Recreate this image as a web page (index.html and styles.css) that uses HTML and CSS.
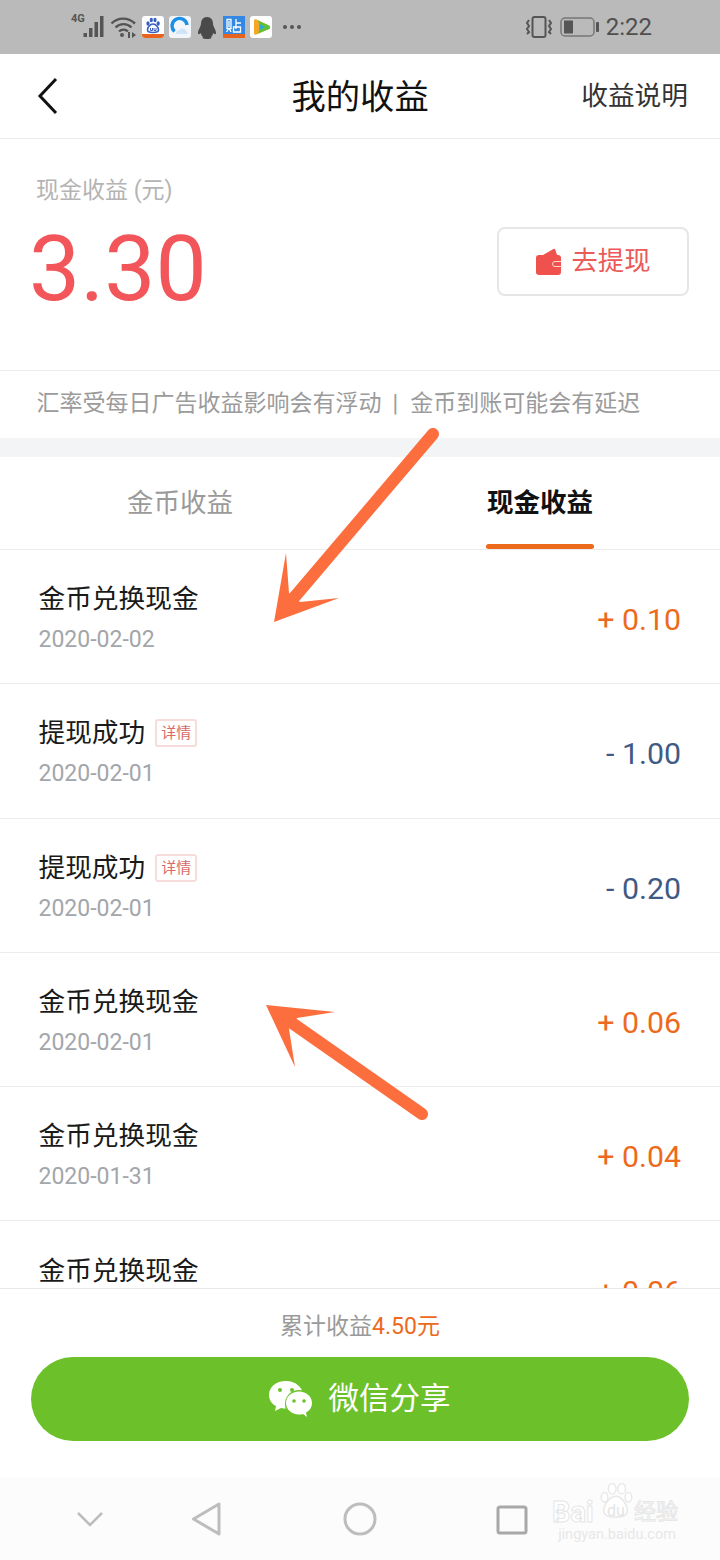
FILE: index.html
```html
<!DOCTYPE html>
<html lang="zh-CN">
<head>
    <meta charset="UTF-8">
    <meta name="viewport" content="width=device-width, initial-scale=1.0">
    <title>我的收益</title>
    <link rel="stylesheet" href="styles.css">
</head>
<body>
    <div class="phone">
        <div class="status-bar">
            <div class="status-left">
                <span class="net">4G</span>
                <svg class="ic-signal" width="22" height="24" viewBox="0 0 22 24"><g fill="#555"><rect x="0.500" y="18" width="3.500" height="4"/><rect x="6" y="13" width="3.500" height="9"/><rect x="11.500" y="7" width="3.500" height="15"/><rect x="17" y="1" width="3.500" height="21"/></g></svg>
                <svg class="ic-wifi" width="27" height="22" viewBox="0 0 27 22"><g fill="none" stroke="#555" stroke-width="2.4"><path d="M1.5 7.5C8 1 18 1 25 7.5"/><path d="M5.5 11.5C10 7 17 7 21.5 11.5"/><path d="M9 15.5C11.5 13 15.5 13 18 15.5"/></g><circle cx="12" cy="19" r="2" fill="#555"/><path d="M18 16h2v6h-2zM22 16l4 3-4 3z" fill="#555"/></svg>
                <span class="app">
                    <svg width="22" height="22" viewBox="0 0 22 22"><rect width="22" height="22" rx="3" fill="#fff"/><g fill="#3a5fc4"><ellipse cx="6" cy="7.500" rx="1.600" ry="2.200"/><ellipse cx="9.300" cy="4" rx="1.600" ry="2.200"/><ellipse cx="13" cy="4" rx="1.600" ry="2.200"/><ellipse cx="16.200" cy="7.500" rx="1.600" ry="2.200"/></g><path d="M11 8c3 0 5.500 3.500 5.500 6 0 2-2 2.500-5.500 2.500S5.500 16 5.500 14c0-2.500 2.500-6 5.500-6z" fill="#fff" stroke="#3a5fc4" stroke-width="1.600"/><path d="M8.500 12v2.500h2V12M12 12v2.500h2V12" fill="none" stroke="#3a5fc4"/><path d="M0 18h22v1a3 3 0 0 1-3 3H3a3 3 0 0 1-3-3z" fill="#e8641e"/></svg>
                </span>
                <span class="app">
                    <svg width="22" height="22" viewBox="0 0 22 22"><rect width="22" height="22" rx="3" fill="#f2f6fb"/><path d="M5.500 15.500A7.500 7.500 0 1 1 18 9" fill="none" stroke="#1a8fe8" stroke-width="3.400"/><path d="M7 18c0-3 2-4 4-4 1-2 5-2 6 1 2 0 3 3 0 3z" fill="#cfe4f7"/></svg>
                </span>
                <svg class="ic-qq" width="22" height="23" viewBox="0 0 22 23"><path d="M11 1c4 0 6 3 6 7 0 2 3 6 3 9 0 2-2 1-3 0 0 2-1 3-2 4 1 1 0 2-4 2s-5-1-4-2c-1-1-2-2-2-4-1 1-3 2-3 0 0-3 3-7 3-9 0-4 2-7 6-7z" fill="#4a4a4a"/></svg>
                <span class="app">
                    <svg width="22" height="22" viewBox="0 0 22 22"><rect width="22" height="22" fill="#3388e6"/><g fill="none" stroke="#fff" stroke-width="1.300"><path d="M4 3.500h4v9H4zM6 5v6M3.500 16l2-3M8 16l-1.500-3"/><path d="M13 3v10M13 7h5M10.500 11h7v5h-7z"/></g><path d="M0 18h22v4H0z" fill="#e8641e"/></svg>
                </span>
                <span class="app">
                    <svg width="22" height="22" viewBox="0 0 22 22"><rect width="22" height="22" rx="3" fill="#fff"/><path d="M4 5c0-1.500 1-2 2.500-1.500L19 9.500c1.500 1 1.500 2.500 0 3.500L6.500 18.500C5 19 4 18.500 4 17z" fill="#f5a623"/><path d="M8 4.500L19 9.500c1.500 1 1.500 2.500 0 3.500L8 17.500c2-4 2-9 0-13z" fill="#5cc23a"/><path d="M9.500 8l5.500 3-5.500 3z" fill="#2fa7e0"/></svg>
                </span>
                <span class="more"><i></i><i></i><i></i></span>
            </div>
            <div class="status-right">
                <svg width="28" height="24" viewBox="0 0 28 24"><rect x="7.500" y="2" width="13" height="20" rx="2" fill="none" stroke="#555" stroke-width="2"/><g fill="none" stroke="#555" stroke-width="2"><path d="M4 5l-2 3 2 3-2 3 2 3 -2 2"/><path d="M24 5l2 3-2 3 2 3-2 3 2 2"/></g></svg>
                <svg width="39" height="20" viewBox="0 0 39 20"><rect x="1" y="1" width="33" height="18" rx="4" fill="none" stroke="#777" stroke-width="1.500"/><rect x="4" y="3.500" width="9" height="13" fill="#555"/><rect x="36" y="5" width="3" height="10" rx="1" fill="#555"/></svg>
                <span class="clock">2:22</span>
            </div>
        </div>

        <header class="topbar">
            <svg class="back" width="22" height="38" viewBox="0 0 22 38"><path d="M19 2L3 19l16 17" fill="none" stroke="#111" stroke-width="3"/></svg>
            <h1>我的收益</h1>
            <a class="explain" href="#">收益说明</a>
        </header>

        <section class="summary">
            <div>
                <p class="summary-label">现金收益 (元)</p>
                <p class="summary-value">3.30</p>
            </div>
            <button class="withdraw" type="button">
                <svg class="withdraw-icon" width="25" height="27" viewBox="0 0 25 27"><path d="M7 7L17.500 1c.8-.4 1.500 0 1.800.8L21 7z" fill="#ef524c"/><rect y="7" width="25" height="20" rx="3" fill="#ef524c"/><path d="M25 13.500h-6a2.500 2.500 0 0 0 0 5h6" fill="none" stroke="#fbd9d7" stroke-width="1"/></svg>
                去提现
            </button>
        </section>

        <p class="note">汇率受每日广告收益影响会有浮动<span class="note-sep">|</span>金币到账可能会有延迟</p>
        <div class="gap"></div>

        <nav class="tabs">
            <a href="#">金币收益</a>
            <a href="#" class="active">现金收益</a>
        </nav>

        <ul class="records">
            <li class="record">
                <div>
                    <div class="record-title">金币兑换现金</div>
                    <div class="record-date">2020-02-02</div>
                </div>
                <span class="amount plus">+ 0.10</span>
            </li>
            <li class="record">
                <div>
                    <div class="record-title">提现成功<span class="tag">详情</span></div>
                    <div class="record-date">2020-02-01</div>
                </div>
                <span class="amount minus">- 1.00</span>
            </li>
            <li class="record">
                <div>
                    <div class="record-title">提现成功<span class="tag">详情</span></div>
                    <div class="record-date">2020-02-01</div>
                </div>
                <span class="amount minus">- 0.20</span>
            </li>
            <li class="record">
                <div>
                    <div class="record-title">金币兑换现金</div>
                    <div class="record-date">2020-02-01</div>
                </div>
                <span class="amount plus">+ 0.06</span>
            </li>
            <li class="record">
                <div>
                    <div class="record-title">金币兑换现金</div>
                    <div class="record-date">2020-01-31</div>
                </div>
                <span class="amount plus">+ 0.04</span>
            </li>
            <li class="record">
                <div>
                    <div class="record-title">金币兑换现金</div>
                    <div class="record-date">2020-01-31</div>
                </div>
                <span class="amount plus">+ 0.06</span>
            </li>
        </ul>

        <footer class="share-bar">
            <p class="total">累计收益<b>4.50元</b></p>
            <button class="share" type="button">
                <svg class="share-icon" width="46" height="38" viewBox="0 0 46 38">
                    <path d="M18 1C8 1 1 7 1 15c0 5 3 9 7 11l-1 5 6-3c2 .5 3 .5 5 .5C28 28.500 35 22 35 15S28 1 18 1z" fill="#fff"/>
                    <circle cx="31" cy="24" r="14" fill="#6cc12a"/>
                    <path d="M31 11.500c-7.500 0-13 5.200-13 11.500s5.500 11.500 13 11.500c1.500 0 2.500 0 4-.5l4 3-1-4.500c4-2 6-5.500 6-9.500 0-6.300-5.500-11.500-13-11.500z" fill="#fff"/>
                    <circle cx="12" cy="10" r="2" fill="#6cc12a"/><circle cx="24" cy="10" r="2" fill="#6cc12a"/>
                    <circle cx="26" cy="21" r="1.800" fill="#6cc12a"/><circle cx="36" cy="21" r="1.800" fill="#6cc12a"/>
                </svg>
                微信分享
            </button>
        </footer>

        <div class="sys-nav">
            <svg width="28" height="18" viewBox="0 0 28 18"><path d="M2 3l12 12L26 3" fill="none" stroke="#bdbdbd" stroke-width="2.500"/></svg>
            <svg class="nav-back" width="32" height="34" viewBox="0 0 32 34"><path d="M29 2v30L3.500 17z" fill="none" stroke="#bdbdbd" stroke-width="3" stroke-linejoin="round"/></svg>
            <svg class="nav-home" width="34" height="34" viewBox="0 0 34 34"><circle cx="17" cy="17" r="15" fill="none" stroke="#bdbdbd" stroke-width="3"/></svg>
            <svg class="nav-recent" width="32" height="32" viewBox="0 0 32 32"><rect x="2" y="4" width="28" height="26" rx="2" fill="none" stroke="#a8a8a8" stroke-width="3"/></svg>
        </div>

        <!-- arrows drawn on top of the screenshot -->
        <svg class="annotations" width="720" height="1560" viewBox="0 0 720 1560">
            <g fill="#fd6e3e">
                <path d="M274 622L286 553L289 593L300 602L339 598z"/>
                <path d="M266 1005L335 1012L297 1018L289 1029L295 1067z"/>
            </g>
            <g stroke="#fd6e3e" stroke-width="12" stroke-linecap="round">
                <path d="M433 434L292 600"/>
                <path d="M422 1114L285 1018"/>
            </g>
        </svg>

        <div class="watermark">
            <div class="wm-logo">
                <span class="wm-bai">Bai</span>
                <span class="wm-paw">
                    <svg width="36" height="40" viewBox="0 0 36 42"><g fill="#fff" stroke="#e8e8e8" stroke-width="1.500"><ellipse cx="6" cy="16" rx="3.500" ry="5"/><ellipse cx="14" cy="7" rx="4" ry="5.500"/><ellipse cx="24" cy="7" rx="4" ry="5.500"/><ellipse cx="31" cy="16" rx="3.500" ry="5"/><path d="M18 15c6 0 12 9 12 15 0 6-6 7-12 7S5 36 5 30c0-6 7-15 13-15z"/></g></svg>
                    <span class="wm-du">du</span>
                </span>
                <span class="wm-cn">经验</span>
            </div>
            <div class="wm-url">jingyan.baidu.com</div>
        </div>
    </div>
</body>
</html>
```

FILE: styles.css
```css
* {
    margin: 0;
    padding: 0;
    box-sizing: border-box;
}
body {
    width: 720px;
    height: 1560px;
    overflow: hidden;
    background-color: #fff;
    font-family: "Roboto", "Noto Sans CJK SC", sans-serif;
}
a {
    text-decoration: none;
    color: inherit;
}
button {
    font-family: inherit;
    cursor: pointer;
}
.phone {
    position: relative;
    width: 720px;
    height: 1560px;
    display: flex;
    flex-direction: column;
    overflow: hidden;
}
.status-bar {
    height: 54px;
    flex: none;
    background-color: #bababa;
    display: flex;
    justify-content: space-between;
    align-items: center;
    padding: 0 68px 0 71px;
}
.status-left {
    display: flex;
    align-items: center;
    gap: 5px;
}
.status-left .net {
    font-size: 11px;
    font-weight: 700;
    color: #555;
    margin: -18px -7px 0 0;
    width: 14px;
}
.app {
    display: flex;
    width: 22px;
    height: 22px;
}
.more {
    display: flex;
    gap: 3px;
    margin-left: 6px;
}
.more i {
    width: 4px;
    height: 4px;
    border-radius: 50%;
    background-color: #555;
}
.status-right {
    display: flex;
    align-items: center;
    gap: 7px;
}
.clock {
    font-size: 24px;
    color: #4f4f4f;
}
.topbar {
    height: 85px;
    flex: none;
    border-bottom: 1px solid #e9e9e9;
    display: flex;
    justify-content: space-between;
    align-items: center;
    padding: 0 32px 0 37px;
    position: relative;
}
.topbar h1 {
    font-size: 34.3px;
    font-weight: 400;
    color: #111;
    position: absolute;
    left: 291.5px;
    margin-top: -4px;
}
.explain {
    font-size: 26.7px;
    color: #333;
    margin-bottom: 6px;
}
.summary {
    height: 232px;
    flex: none;
    border-bottom: 1px solid #ececec;
    display: flex;
    justify-content: space-between;
    padding: 34px 31px 0 31px;
}
.summary-label {
    font-size: 23px;
    line-height: 36px;
    color: #b4b4b4;
    margin-left: 5px;
}
.summary-value {
    font-size: 91.2px;
    line-height: 100px;
    color: #f2565a;
    margin: 10px 0 0 -2px;
}
.withdraw {
    width: 192px;
    height: 69px;
    margin-top: 54px;
    padding: 0 0 6px 0;
    background-color: #fff;
    border: 2px solid #e6e6e6;
    border-radius: 8px;
    color: #ec5a58;
    font-size: 26.3px;
    display: flex;
    justify-content: center;
    align-items: center;
    gap: 11px;
}
.withdraw-icon {
    margin-top: 6px;
}
.note {
    height: 67px;
    flex: none;
    font-size: 23px;
    line-height: 66px;
    color: #9b9b9b;
    padding-left: 36.5px;
    white-space: nowrap;
}
.note-sep {
    margin: 0 12px 0 11px;
}
.gap {
    height: 19px;
    flex: none;
    background-color: #f3f4f6;
}
.tabs {
    height: 93px;
    flex: none;
    border-bottom: 1px solid #ececec;
    display: flex;
}
.tabs a {
    flex: 1;
    font-size: 26.5px;
    line-height: 91px;
    text-align: center;
    color: #9a9a9a;
    position: relative;
}
.tabs a.active {
    color: #111;
    font-weight: 700;
}
.tabs a.active::after {
    content: "";
    position: absolute;
    left: 126px;
    bottom: 0;
    width: 108px;
    height: 5px;
    border-radius: 3px;
    background-color: #ed6a1c;
}
.records {
    height: 738px;
    flex: none;
    overflow: hidden;
    list-style: none;
}
.record {
    height: 134.3px;
    border-bottom: 1px solid #ececec;
    display: flex;
    justify-content: space-between;
    align-items: center;
    padding: 2px 39px 0 39px;
}
.record-title {
    font-size: 26.7px;
    line-height: 40px;
    color: #1a1a1a;
    display: flex;
    align-items: center;
    margin-left: -0.5px;
}
.record-date {
    font-size: 23px;
    line-height: 32px;
    color: #a3a6aa;
    margin-top: 5px;
    margin-left: -0.5px;
}
.tag {
    width: 42px;
    height: 28px;
    margin-left: 10px;
    border: 2px solid #f7dcdc;
    border-radius: 3px;
    font-size: 15px;
    line-height: 24px;
    text-align: center;
    color: #d9696b;
}
.amount {
    font-size: 30.3px;
    padding-top: 4px;
}
.amount.plus {
    color: #ed6a1c;
}
.amount.minus {
    color: #3f5a85;
}
.share-bar {
    height: 190px;
    flex: none;
    border-top: 1px solid #e8e8e8;
    padding: 0 31px;
    background-color: #fff;
    text-align: center;
}
.total {
    font-size: 23px;
    line-height: 60px;
    padding-top: 8px;
    color: #9a9a9a;
}
.total b {
    font-weight: 400;
    color: #ed6a1c;
}
.share {
    width: 658px;
    height: 84px;
    padding-bottom: 6px;
    border: none;
    border-radius: 42px;
    background-color: #6cc12a;
    color: #fff;
    font-size: 30.5px;
    display: flex;
    justify-content: center;
    align-items: center;
    gap: 15px;
}
.share-icon {
    margin: 5px 0 0 -2px;
}
.sys-nav {
    flex: 1;
    background-color: #fcfcfc;
    display: flex;
    align-items: center;
    padding-left: 76px;
}
.nav-back {
    margin-left: 86px;
}
.nav-home {
    margin-left: 121px;
}
.nav-recent {
    margin-left: 119px;
}
.annotations {
    position: absolute;
    left: 0;
    top: 0;
    pointer-events: none;
}
.watermark {
    position: absolute;
    left: 552px;
    top: 1480px;
    width: 130px;
    color: #ececec;
    pointer-events: none;
}
.wm-logo {
    display: flex;
    align-items: flex-end;
    height: 44px;
}
.wm-bai {
    font-size: 29px;
    line-height: 24px;
    font-weight: 700;
    color: #fff;
    -webkit-text-stroke: 1px #e6e6e6;
    width: 46px;
}
.wm-paw {
    position: relative;
    width: 36px;
    height: 42px;
}
.wm-du {
    position: absolute;
    left: 9px;
    top: 19px;
    font-size: 16px;
    color: #e4e4e4;
}
.wm-cn {
    font-size: 22px;
    line-height: 24px;
    color: #fff;
    -webkit-text-stroke: 1px #e6e6e6;
    white-space: nowrap;
}
.wm-url {
    font-size: 14.5px;
    line-height: 16px;
    margin-top: 3px;
    text-align: center;
    white-space: nowrap;
    color: #e8e8e8;
}
```
